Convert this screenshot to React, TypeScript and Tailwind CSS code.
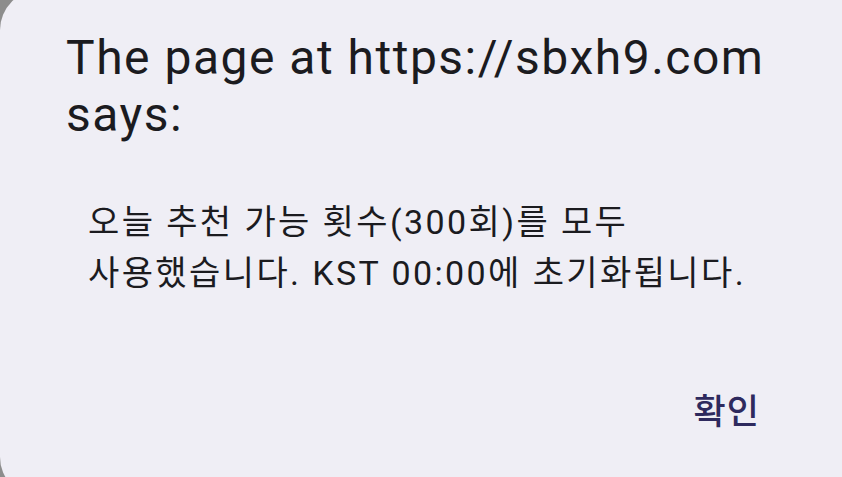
import React from 'react';

const font = { fontFamily: 'Roboto, "Noto Sans CJK KR", sans-serif' };

const AlertDialog: React.FC = () => {
  return (
    <div
      className="mt-[-10px] h-[507px] w-[900px] rounded-[40px] bg-[#efeef5] pl-[66px] pr-[124px] pt-[39px]"
      style={font}
    >
      <h2 className="text-[48px] leading-[57px] font-normal tracking-[1.5px] text-[#1b1b1f]">
        The page at https://sbxh9.com says:
      </h2>
      <p className="mt-[54px] pl-[22px] text-[34px] leading-[51px] tracking-[2.4px] break-keep text-[#1b1b1f]">
        오늘 추천 가능 횟수(300회)를 모두 사용했습니다. KST 00:00에 초기화됩니다.
      </p>
      <div className="mt-[92px] flex justify-end pr-[16px]">
        <button className="text-[35px] leading-[44px] font-medium tracking-[1px] text-[#2e2a5e]">확인</button>
      </div>
    </div>
  );
};

export default function App() {
  return (
    <div className="h-[477px] w-[842px] overflow-hidden bg-[#8d8d8d]">
      <AlertDialog />
    </div>
  );
}
